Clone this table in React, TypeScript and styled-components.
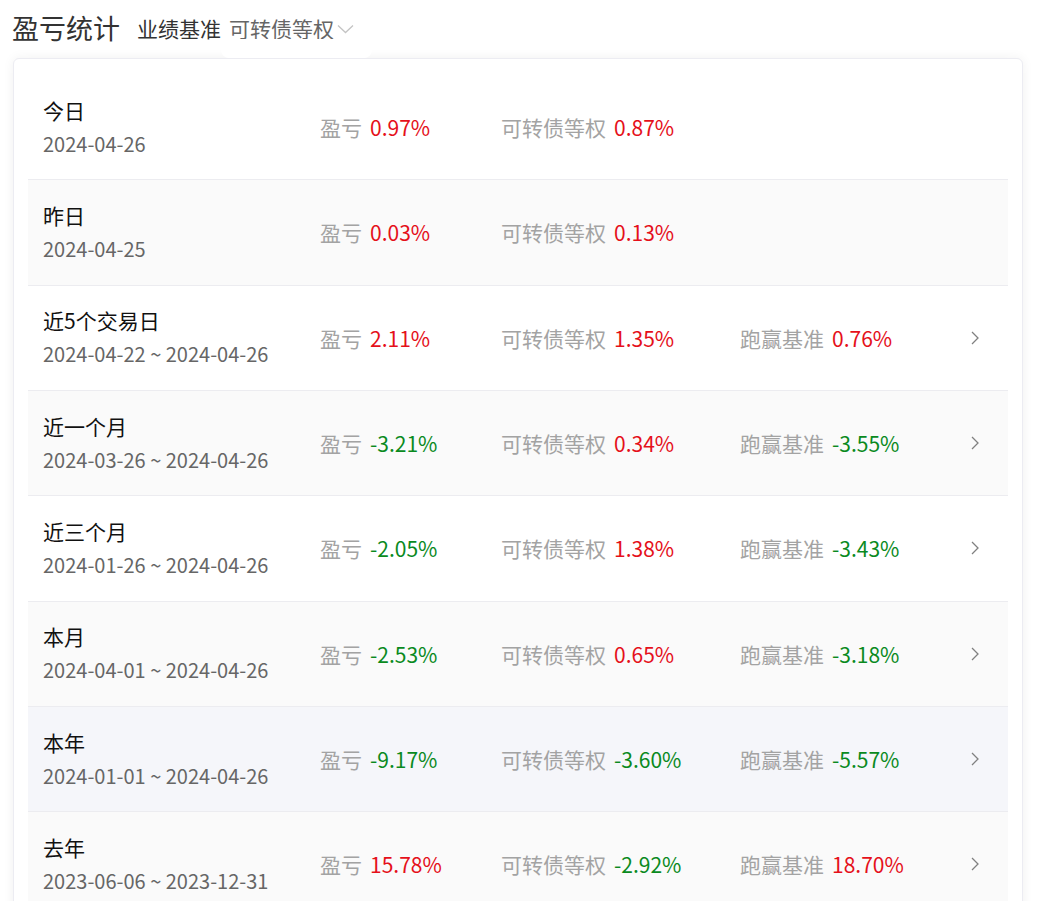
import React from "react";
import styled, { createGlobalStyle } from "styled-components";

const Global = createGlobalStyle`
  html, body { margin: 0; padding: 0; background: #ffffff; }
  body { font-family: "Noto Sans CJK SC", "Noto Sans", sans-serif; }
  * { box-sizing: border-box; }
`;

const Page = styled.div`
  padding: 0 34px 0 13px;
  width: 1057px;
`;

const Header = styled.div`
  display: flex;
  align-items: center;
  height: 58px;
  padding-bottom: 2px;
`;

const Title = styled.div`
  font-size: 27px;
  color: #333333;
  margin-left: -1px;
  line-height: 36px;
`;

const Bench = styled.div`
  font-size: 21px;
  color: #333333;
  margin-left: 17px;
  line-height: 30px;
`;

const Trigger = styled.div`
  position: relative;
  display: flex;
  align-items: center;
  font-size: 21px;
  color: #666666;
  margin-left: 8px;
  line-height: 30px;
  &::after {
    content: "";
    position: absolute;
    left: -8px;
    right: -18px;
    top: 26px;
    height: 19px;
    background: #ffffff;
    border-radius: 0 0 8px 8px;
    z-index: 2;
  }
`;

const Caret = styled.svg`
  margin-left: 3px;
  margin-top: 2px;
`;

const Card = styled.div`
  border: 1px solid #ececf2;
  border-radius: 6px;
  box-shadow: 0 0 12px rgba(0, 0, 0, 0.06);
  padding: 16px 14px 0;
  background: #ffffff;
`;

const Row = styled.div<{ $bg: string }>`
  display: flex;
  align-items: center;
  height: 105.33px;
  padding: 0 15px;
  background: ${(p) => p.$bg};
  border-bottom: 1px solid #ececf0;
`;

const NameCol = styled.div`
  width: 277px;
  flex: none;
  display: flex;
  flex-direction: column;
`;

const Name = styled.div`
  font-size: 21px;
  line-height: 24px;
  color: #111111;
`;

const DateText = styled.div`
  font-size: 20px;
  line-height: 26px;
  color: #666666;
  margin-top: 9px;
`;

const Metric = styled.div<{ $w?: number }>`
  ${(p) => (p.$w ? `width: ${p.$w}px; flex: none;` : "flex: 1;")}
  font-size: 21px;
  line-height: 28px;
  white-space: nowrap;
`;

const Label = styled.span`
  color: #a3a3a3;
`;

const Value = styled.span<{ $up: boolean }>`
  color: ${(p) => (p.$up ? "#e5101a" : "#0a8a1e")};
  margin-left: 8px;
`;

const Chevron = styled.svg`
  flex: none;
  margin-right: 13px;
`;

type Item = {
  name: string;
  date: string;
  pnl: string;
  cb: string;
  beat?: string;
  bg: string;
};

const rows: Item[] = [
  { name: "今日", date: "2024-04-26", pnl: "0.97%", cb: "0.87%", bg: "#ffffff" },
  { name: "昨日", date: "2024-04-25", pnl: "0.03%", cb: "0.13%", bg: "#fafafa" },
  { name: "近5个交易日", date: "2024-04-22 ~ 2024-04-26", pnl: "2.11%", cb: "1.35%", beat: "0.76%", bg: "#ffffff" },
  { name: "近一个月", date: "2024-03-26 ~ 2024-04-26", pnl: "-3.21%", cb: "0.34%", beat: "-3.55%", bg: "#fafafa" },
  { name: "近三个月", date: "2024-01-26 ~ 2024-04-26", pnl: "-2.05%", cb: "1.38%", beat: "-3.43%", bg: "#ffffff" },
  { name: "本月", date: "2024-04-01 ~ 2024-04-26", pnl: "-2.53%", cb: "0.65%", beat: "-3.18%", bg: "#fafafa" },
  { name: "本年", date: "2024-01-01 ~ 2024-04-26", pnl: "-9.17%", cb: "-3.60%", beat: "-5.57%", bg: "#f5f6fa" },
  { name: "去年", date: "2023-06-06 ~ 2023-12-31", pnl: "15.78%", cb: "-2.92%", beat: "18.70%", bg: "#fafafa" },
];

const up = (v: string) => !v.startsWith("-");

export default function App() {
  return (
    <>
      <Global />
      <Page>
        <Header>
          <Title>盈亏统计</Title>
          <Bench>业绩基准</Bench>
          <Trigger>
            可转债等权
            <Caret width="17" height="10" viewBox="0 0 17 10" fill="none">
              <path d="M1 1.5 L8.5 8.5 L16 1.5" stroke="#c4c4c4" strokeWidth="1.3" />
            </Caret>
          </Trigger>
        </Header>
        <Card>
          {rows.map((r) => (
            <Row key={r.name} $bg={r.bg}>
              <NameCol>
                <Name>{r.name}</Name>
                <DateText>{r.date}</DateText>
              </NameCol>
              <Metric $w={181}>
                <Label>盈亏</Label>
                <Value $up={up(r.pnl)}>{r.pnl}</Value>
              </Metric>
              <Metric $w={239}>
                <Label>可转债等权</Label>
                <Value $up={up(r.cb)}>{r.cb}</Value>
              </Metric>
              <Metric>
                {r.beat && (
                  <>
                    <Label>跑赢基准</Label>
                    <Value $up={up(r.beat)}>{r.beat}</Value>
                  </>
                )}
              </Metric>
              {r.beat && (
                <Chevron width="10" height="16" viewBox="0 0 10 16" fill="none">
                  <path d="M2 2 L8 8 L2 14" stroke="#808080" strokeWidth="1.3" />
                </Chevron>
              )}
            </Row>
          ))}
        </Card>
      </Page>
    </>
  );
}
